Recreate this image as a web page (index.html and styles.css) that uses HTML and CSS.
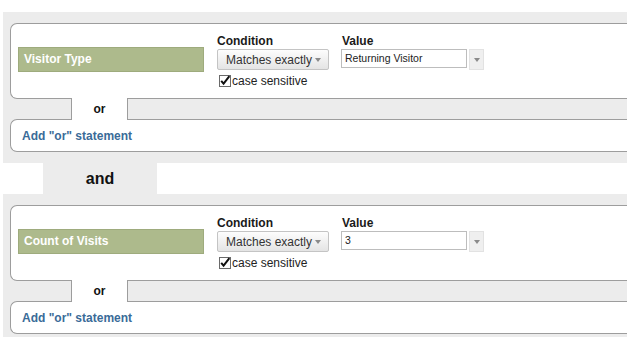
FILE: index.html
```html
<!DOCTYPE html>
<html lang="en">
<head>
    <meta charset="UTF-8">
    <title>Advanced Segment Conditions</title>
    <link rel="stylesheet" href="styles.css">
</head>
<body>
    <div class="group">
        <div class="rule">
            <div class="dimension">Visitor Type</div>
            <div class="condition">
                <div class="field-label">Condition</div>
                <div class="select">Matches exactly <span class="caret"></span></div>
                <div class="check">
                    <svg width="12" height="12" viewBox="0 0 12 12"><rect x="0.5" y="0.5" width="11" height="11" fill="#fff" stroke="#6a6a6a"/><path d="M2.2 5.8 L4.6 8.6 L10.4 1.2" fill="none" stroke="#111" stroke-width="2"/></svg>case sensitive
                </div>
            </div>
            <div class="value">
                <div class="field-label">Value</div>
                <div class="combo">
                    <div class="text-input">Returning Visitor</div>
                    <div class="combo-btn"><span class="caret"></span></div>
                </div>
            </div>
        </div>
        <div class="or-row">
            <div class="or-gap"></div>
            <div class="or-tab">or</div>
        </div>
        <div class="add-box"><a href="#">Add "or" statement</a></div>
    </div>

    <div class="and-row">
        <div class="and-tab">and</div>
    </div>

    <div class="group">
        <div class="rule">
            <div class="dimension">Count of Visits</div>
            <div class="condition">
                <div class="field-label">Condition</div>
                <div class="select">Matches exactly <span class="caret"></span></div>
                <div class="check">
                    <svg width="12" height="12" viewBox="0 0 12 12"><rect x="0.5" y="0.5" width="11" height="11" fill="#fff" stroke="#6a6a6a"/><path d="M2.2 5.8 L4.6 8.6 L10.4 1.2" fill="none" stroke="#111" stroke-width="2"/></svg>case sensitive
                </div>
            </div>
            <div class="value">
                <div class="field-label">Value</div>
                <div class="combo">
                    <div class="text-input">3</div>
                    <div class="combo-btn"><span class="caret"></span></div>
                </div>
            </div>
        </div>
        <div class="or-row">
            <div class="or-gap"></div>
            <div class="or-tab">or</div>
        </div>
        <div class="add-box"><a href="#">Add "or" statement</a></div>
    </div>
</body>
</html>
```

FILE: styles.css
```css
body {
    margin: 0;
    padding-top: 12px;
    font-family: "Liberation Sans", Arial, sans-serif;
    font-size: 12px;
    color: #222;
    background: #fff;
    overflow: hidden;
}

.group {
    margin-left: 3px;
    padding: 11px 0 11px 7px;
    background: #ececec;
}

.rule {
    display: flex;
    align-items: flex-start;
    height: 76px;
    box-sizing: border-box;
    padding-left: 7px;
    background: #fff;
    border: 1px solid #9d9d9d;
    border-right: none;
    border-radius: 7px 0 0 7px;
}

.dimension {
    width: 186px;
    height: 25px;
    box-sizing: border-box;
    margin-top: 23px;
    padding-left: 5px;
    background: #adba8c;
    border: 1px solid #9eab7d;
    color: #fff;
    font-weight: bold;
    line-height: 23px;
}

.condition {
    width: 112px;
    margin-left: 13px;
    padding-top: 10px;
}

.value {
    margin-left: 12px;
    padding-top: 10px;
}

.field-label {
    font-weight: bold;
    line-height: 14px;
    color: #1a1a1a;
}

.value .field-label {
    padding-left: 1px;
}

.select {
    display: flex;
    align-items: center;
    height: 21px;
    box-sizing: border-box;
    margin-top: 1px;
    padding-left: 8px;
    border: 1px solid #c4c4c4;
    border-radius: 2px;
    background: linear-gradient(#fdfdfd, #e4e4e4);
    color: #333;
}

.caret {
    display: inline-block;
    width: 0;
    height: 0;
    border-left: 3.5px solid transparent;
    border-right: 3.5px solid transparent;
    border-top: 4px solid #8a8a8a;
}

.select .caret {
    margin-left: 3px;
}

.check {
    display: flex;
    align-items: center;
    margin-top: 4px;
    line-height: 14px;
    color: #222;
}

.check svg {
    margin: 0 1px 0 2px;
}

.combo {
    display: flex;
    align-items: flex-start;
    margin-top: 1px;
}

.text-input {
    width: 126px;
    height: 19px;
    box-sizing: border-box;
    padding-left: 3px;
    border: 1px solid #bdbdbd;
    background: #fff;
    font-size: 10.5px;
    line-height: 17px;
    color: #222;
}

.combo-btn {
    display: flex;
    align-items: center;
    justify-content: center;
    width: 15px;
    height: 21px;
    box-sizing: border-box;
    margin-left: 2px;
    background: #efefef;
    border: 1px solid #e2e2e2;
}

.or-row {
    display: flex;
    height: 20px;
}

.or-gap {
    width: 61px;
}

.or-tab {
    position: relative;
    z-index: 1;
    width: 57px;
    height: 22px;
    box-sizing: border-box;
    margin: -1px 0;
    background: #fff;
    border-left: 1px solid #9d9d9d;
    border-right: 1px solid #9d9d9d;
    font-weight: bold;
    text-align: center;
    line-height: 22px;
    color: #111;
}

.add-box {
    display: flex;
    align-items: center;
    height: 33px;
    box-sizing: border-box;
    padding-left: 11px;
    background: #fff;
    border: 1px solid #9d9d9d;
    border-right: none;
    border-radius: 7px 0 0 7px;
}

.add-box a {
    color: #3a6b98;
    font-weight: bold;
    font-size: 12px;
    text-decoration: none;
}

.and-row {
    display: flex;
    height: 31px;
}

.and-tab {
    width: 114px;
    margin-left: 43px;
    background: #ececec;
    font-size: 16px;
    font-weight: bold;
    line-height: 31px;
    text-align: center;
    color: #111;
}
```
